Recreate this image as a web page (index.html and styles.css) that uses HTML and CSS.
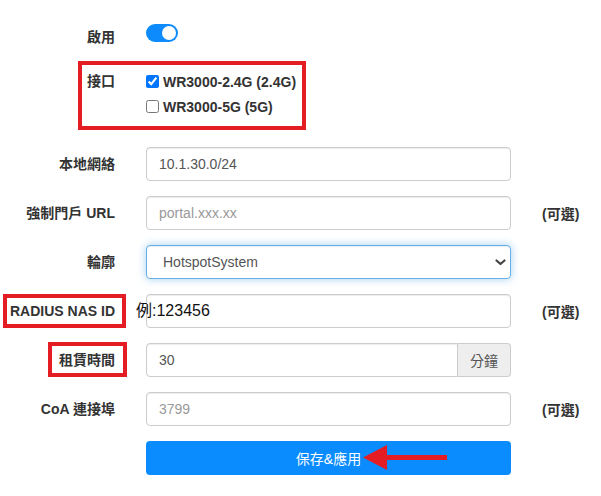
FILE: index.html
```html
<!DOCTYPE html>
<html lang="zh-Hant">
<head>
<meta charset="utf-8">
<title>Hotspot</title>
<link rel="stylesheet" href="styles.css">
</head>
<body>
<div class="page">
  <form class="form">
    <div class="row row-toggle">
      <label class="lbl">啟用</label>
      <div class="ctrl"><span class="switch"><span class="knob"></span></span></div>
    </div>
    <div class="row row-iface">
      <label class="lbl">接口</label>
      <div class="ctrl checks">
        <label class="check"><input type="checkbox" checked> WR3000-2.4G (2.4G)</label>
        <label class="check"><input type="checkbox"> WR3000-5G (5G)</label>
      </div>
    </div>
    <div class="row">
      <label class="lbl">本地網絡</label>
      <div class="ctrl"><input class="fc" type="text" value="10.1.30.0/24"></div>
    </div>
    <div class="row">
      <label class="lbl">強制門戶 URL</label>
      <div class="ctrl"><input class="fc" type="text" placeholder="portal.xxx.xx"></div>
      <span class="opt">(可選)</span>
    </div>
    <div class="row">
      <label class="lbl">輪廓</label>
      <div class="ctrl select-wrap">
        <select class="fc sel"><option>HotspotSystem</option></select>
        <svg class="chev" width="11" height="7" viewBox="0 0 11 7"><path d="M1.5 1.5 L5.5 5 L9.5 1.5" fill="none" stroke="#444" stroke-width="2.2" stroke-linecap="round" stroke-linejoin="round"/></svg>
      </div>
    </div>
    <div class="row">
      <label class="lbl">RADIUS NAS ID</label>
      <div class="ctrl nas"><input class="fc" type="text"><span class="example">例:123456</span></div>
      <span class="opt">(可選)</span>
    </div>
    <div class="row">
      <label class="lbl">租賃時間</label>
      <div class="ctrl group"><input class="fc grp-input" type="text" value="30"><span class="addon">分鐘</span></div>
    </div>
    <div class="row">
      <label class="lbl">CoA 連接埠</label>
      <div class="ctrl"><input class="fc" type="text" placeholder="3799"></div>
      <span class="opt">(可選)</span>
    </div>
    <div class="row">
      <span></span>
      <div class="ctrl"><button type="button" class="btn">保存&amp;應用</button></div>
    </div>
  </form>
  <div class="mark mark-iface"></div>
  <div class="mark mark-nas"></div>
  <div class="mark mark-lease"></div>
  <svg class="arrow" width="84" height="25" viewBox="0 0 84 25"><polygon points="0,12.5 24,0 24,25" fill="#e31d23"/><rect x="23" y="10" width="61" height="5" fill="#e31d23"/></svg>
</div>
</body>
</html>
```
FILE: styles.css
```css
* { box-sizing: border-box; }
html, body { margin: 0; padding: 0; background: #fff; }
body {
  font-family: "Liberation Sans", "Noto Sans CJK TC", sans-serif;
  font-size: 14px;
  color: #333;
}
.page { position: relative; width: 601px; height: 496px; overflow: hidden; }
.form { display: flex; flex-direction: column; padding-top: 16px; margin: 0; }
.row {
  display: grid;
  grid-template-columns: 115px 365px auto;
  column-gap: 31px;
  align-items: center;
  min-height: 34px;
  margin-top: 15px;
}
.row-toggle { margin-top: 0; }
.row-toggle .lbl { padding-top: 7px; }
.row-iface { margin-top: 19px; align-items: start; }
.row-iface + .row { margin-top: 28px; }
.lbl { font-weight: bold; text-align: right; white-space: nowrap; line-height: 20px; }
.row-iface .lbl { line-height: 25px; }
.ctrl { position: relative; display: flex; align-items: center; }
.switch {
  display: inline-block; position: relative;
  width: 32px; height: 18px; border-radius: 9px; background: #0d8bfd;
}
.knob {
  position: absolute; right: 2px; top: 2px;
  width: 14px; height: 14px; border-radius: 50%; background: #fff;
}
.checks { flex-direction: column; align-items: flex-start; }
.check { display: flex; align-items: center; height: 25px; font-weight: bold; white-space: nowrap; }
.check input { margin: 0 4px 0 0; width: 13px; height: 13px; }
.fc {
  display: block; width: 100%; height: 34px;
  padding: 6px 12px;
  font: inherit; font-size: 14px; color: #555;
  background: #fff; border: 1px solid #ccc; border-radius: 4px;
  box-shadow: inset 0 1px 1px rgba(0,0,0,.075);
  outline: none;
}
.fc::placeholder { color: #999; }
.select-wrap { position: relative; }
.sel {
  appearance: none; -webkit-appearance: none;
  padding-left: 16px;
  border-color: #66afe9;
  box-shadow: inset 0 1px 1px rgba(0,0,0,.075), 0 0 8px rgba(102,175,233,.6);
}
.chev { position: absolute; right: 5px; top: 14px; }
.nas .example {
  position: absolute; left: -10px; top: 7px;
  font-size: 16px; color: #111; line-height: 20px;
}
.group { display: flex; }
.grp-input { flex: 1; border-top-right-radius: 0; border-bottom-right-radius: 0; }
.addon {
  display: flex; align-items: center; height: 34px;
  padding: 6px 12px; color: #555; background: #eee;
  border: 1px solid #ccc; border-left: 0;
  border-radius: 0 4px 4px 0; white-space: nowrap;
}
.opt { font-weight: bold; white-space: nowrap; }
.btn {
  width: 100%; height: 34px; border: 0; border-radius: 4px;
  background: #0a8cff; color: #fff; font: inherit; font-size: 14px;
}
.mark { position: absolute; border: 4px solid #e31d23; }
.mark-iface { left: 78px; top: 61px; width: 228px; height: 69px; }
.mark-nas { left: 3px; top: 294px; width: 123px; height: 34px; }
.mark-lease { left: 48px; top: 342px; width: 79px; height: 35px; }
.arrow { position: absolute; left: 363px; top: 445px; }
```
